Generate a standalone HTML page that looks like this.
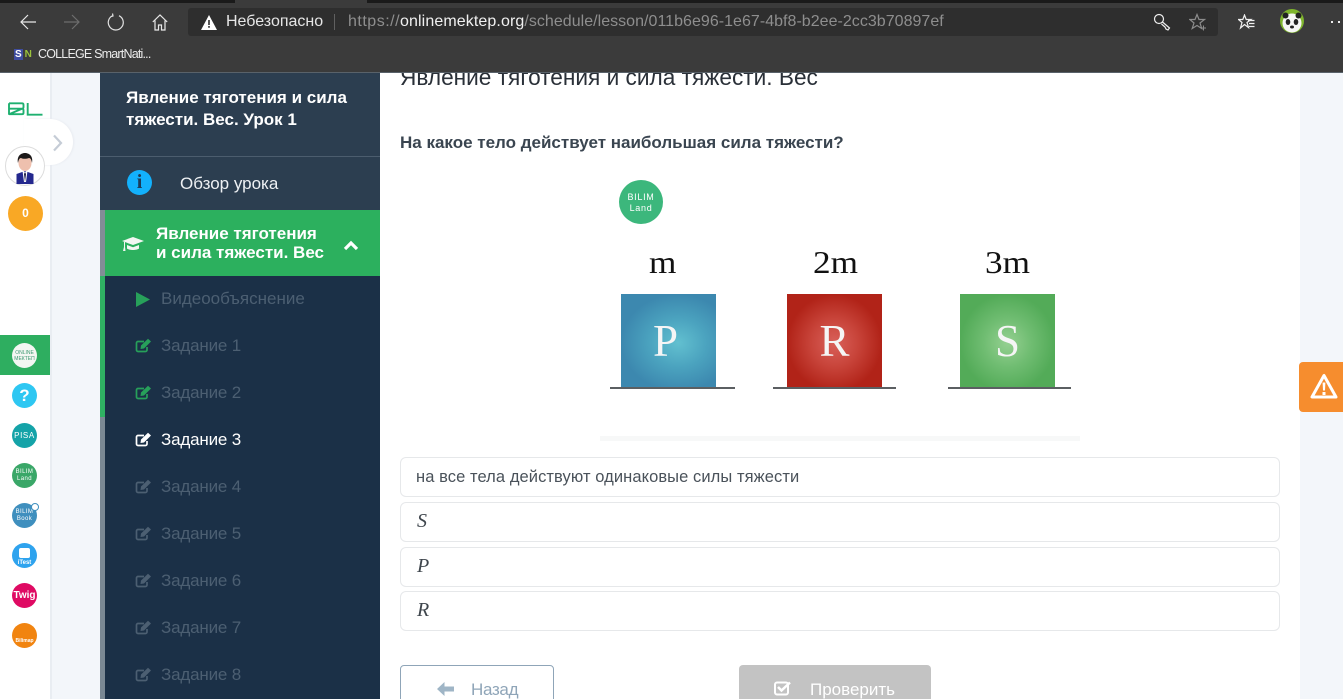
<!DOCTYPE html>
<html lang="ru"><head><meta charset="utf-8"><title>Явление тяготения</title>
<style>
html,body{margin:0;padding:0;width:1343px;height:699px;overflow:hidden;background:#fff}
body{position:relative;font-family:"Liberation Sans",sans-serif}
.a{position:absolute}
.t{position:absolute;white-space:nowrap;line-height:1}
.task{position:absolute;left:161px;font-size:17px;letter-spacing:-.18px;color:#4c5f72;white-space:nowrap;line-height:20px}
.ic{position:absolute;left:135px;width:17px;height:15px}
.opt{position:absolute;left:400px;width:878px;height:38px;border:1px solid #e6e8ea;border-radius:6px;background:#fff}
.m{position:absolute;left:417px;font:italic 20px "Liberation Serif",serif;color:#3f464d;line-height:20px}
.c{position:absolute;left:12px;width:25px;height:25px;border-radius:50%;color:#fff;text-align:center;font-size:6px;line-height:7px;overflow:hidden}
.box{position:absolute;top:294px;width:95px;height:94px;color:#f5f5f5;font:45px/94px "Liberation Serif",serif;text-align:center}
.base{position:absolute;top:387px;height:2px;background:#5b5f62}
.lab{position:absolute;top:244px;font:32px/36px "Liberation Serif",serif;color:#111;white-space:nowrap;transform:scaleX(1.1);transform-origin:0 50%}
</style></head><body>

<!-- page background -->
<div class="a" style="left:50px;top:73px;width:50px;height:626px;background:#f3f6fa"></div>
<div class="a" style="left:1300px;top:73px;width:43px;height:626px;background:#f3f6fa"></div>
<div class="a" style="left:380px;top:73px;width:920px;height:626px;background:#fff"></div>

<!-- main -->
<div class="t" style="left:400px;top:66px;font-size:22.65px;color:#2a3038">Явление тяготения и сила тяжести. Вес</div>
<div class="t" style="left:400px;top:134px;font-size:17px;font-weight:bold;color:#3a4550">На какое тело действует наибольшая сила тяжести?</div>

<div class="a" style="left:619px;top:180px;width:44px;height:44px;border-radius:50%;background:#3cb77c;color:#fff;font-size:9px;line-height:11px;letter-spacing:.7px;text-align:center;padding-top:12px;box-sizing:border-box">BILIM<br>Land</div>

<div class="lab" style="left:649px">m</div>
<div class="lab" style="left:813px">2m</div>
<div class="lab" style="left:985px">3m</div>
<div class="box" style="left:621px;text-indent:-6px;background:radial-gradient(ellipse at 60% 52%,#62c0d0 0%,#4ba3bf 35%,#3c88af 70%)">P</div>
<div class="box" style="left:787px;background:radial-gradient(ellipse at 50% 52%,#d9605a 0%,#c8443a 35%,#b12318 70%)">R</div>
<div class="box" style="left:960px;background:radial-gradient(ellipse at 50% 52%,#95d091 0%,#70bd72 35%,#53ab58 70%)">S</div>
<div class="base" style="left:610px;width:125px"></div>
<div class="base" style="left:773px;width:123px"></div>
<div class="base" style="left:948px;width:123px"></div>
<div class="a" style="left:600px;top:436px;width:480px;height:5px;background:#f7f8f8"></div>

<div class="opt" style="top:457px"></div>
<div class="opt" style="top:502px"></div>
<div class="opt" style="top:547px"></div>
<div class="opt" style="top:591px"></div>
<div class="t" style="left:416px;top:469px;font-size:16.500px;letter-spacing:.08px;color:#4a525a">на все тела действуют одинаковые силы тяжести</div>
<div class="m" style="top:511px">S</div>
<div class="m" style="top:556px">P</div>
<div class="m" style="top:600px">R</div>

<div class="a" style="left:400px;top:665px;width:152px;height:50px;border:1px solid #8fa5b8;border-radius:4px;background:#fff"></div>
<svg class="a" style="left:437px;top:682px" width="17" height="14" viewBox="0 0 17 14"><path d="M7.500 0 0 7l7.500 7V9.500H17v-5H7.500z" fill="#9fb5c6"/></svg>
<div class="t" style="left:471px;top:681px;font-size:17px;letter-spacing:-.3px;color:#8fa5b8">Назад</div>
<div class="a" style="left:739px;top:665px;width:192px;height:50px;border-radius:4px;background:#c3c3c3"></div>
<svg class="a" style="left:774px;top:681px" width="18" height="15" viewBox="0 0 18 15"><rect x="1" y="1.500" width="13" height="12" rx="2" fill="none" stroke="#fff" stroke-width="2"/><path d="m4 6 3.500 3.500L16 1.500" fill="none" stroke="#fff" stroke-width="2.500"/></svg>
<div class="t" style="left:810px;top:681px;font-size:17px;color:#fff">Проверить</div>

<!-- warning tab -->
<div class="a" style="left:1299px;top:362px;width:44px;height:50px;border-radius:4px 0 0 4px;background:#f68d2e"></div>
<svg class="a" style="left:1310px;top:373px" width="28" height="26" viewBox="0 0 28 26"><path d="M14 2.500 2 24h24z" fill="none" stroke="#fff" stroke-width="3" stroke-linejoin="round"/><path d="M12.600 9.500h2.800l-.4 8h-2zM12.500 19h3v3h-3z" fill="#fff"/></svg>

<!-- left rail -->
<div class="a" style="left:0;top:73px;width:50px;height:626px;background:#fff"></div>
<div class="a" style="left:50px;top:73px;width:2px;height:626px;background:#e9edf2"></div>
<div class="a" style="left:24px;top:119px;width:49px;height:46px;border-radius:0 24px 24px 0;background:#fff;box-shadow:1px 0 2px #e8ebf0"></div>
<svg class="a" style="left:52px;top:134px" width="11" height="18" viewBox="0 0 11 18"><path d="m2 1.500 7 7.500-7 7.500" fill="none" stroke="#c5ccd6" stroke-width="2.200"/></svg>
<svg class="a" style="left:8px;top:102px" width="35" height="14" viewBox="0 0 35 14"><path d="M1 1.300h13q1.500 0 1.500 1.500v2.200q0 1.700-1.500 1.700H1m13 0q1.500 0 1.500 1.700v2.300q0 1.500-1.500 1.500H1zM1 1.300v11.400M19.700 1v11.700H34.500" fill="none" stroke="#1fb070" stroke-width="1.900"/></svg>

<svg class="a" style="left:5px;top:146px" width="40" height="40" viewBox="0 0 40 40"><circle cx="20" cy="20" r="19.500" fill="#fff" stroke="#dcdcdc"/><path d="M11.500 38V28l8.500-3 8.500 3v10z" fill="#24288e"/><path d="m17.500 25 2.500 1 2.500-1-1.500 11h-2z" fill="#fff"/><path d="M20 26l1 2-1 8-1-8z" fill="#1c1c44"/><ellipse cx="20" cy="17" rx="6.500" ry="8" fill="#eec0ae"/><path d="M13 17c-1.500-7 3-10 7-10s8.500 3 7 10c-.5-3-1.500-5-3-5-3 1-6 1-8 0-1.500 0-2.500 2-3 5z" fill="#1d1a1a"/></svg>
<div class="a" style="left:8px;top:196px;width:35px;height:35px;border-radius:50%;background:#f9a825;color:#fff;font-size:12px;font-weight:bold;line-height:35px;text-align:center">0</div>

<div class="a" style="left:0;top:335px;width:50px;height:40px;background:#2eae60"></div>
<div class="c" style="top:343px;background:#f3f6f2;color:#3d9a72;font-size:5px;line-height:6px;padding-top:7px;box-sizing:border-box">ONLINE<br>МЕКТЕП</div>
<div class="c" style="top:383px;background:#2ec7f2;font-size:17px;line-height:25px;font-weight:bold">?</div>
<div class="c" style="top:423px;background:#14a3a8;font-size:8px;line-height:25px;letter-spacing:.6px">PISA</div>
<div class="c" style="top:463px;background:#3aa768;padding-top:6px;box-sizing:border-box;letter-spacing:.4px">BILIM<br>Land</div>
<div class="c" style="top:503px;background:#3f8fbe;padding-top:6px;box-sizing:border-box;letter-spacing:.4px">BILIM<br>Book</div>
<div class="a" style="left:31px;top:503px;width:6px;height:6px;border-radius:50%;background:#fff;border:1px solid #3f8fbe"></div>
<div class="c" style="top:543px;background:#2ea3ee"><div class="a" style="left:7px;top:5px;width:11px;height:10px;border-radius:2px;background:#fff"></div><div class="a" style="left:0;width:25px;top:17px;font-size:6px;line-height:6px;font-weight:bold">iTest</div></div>
<div class="c" style="top:583px;background:#df0a63;font-size:10px;line-height:25px;font-weight:bold">Twig</div>
<div class="c" style="top:623px;background:#f18410;padding-top:15px;box-sizing:border-box;font-size:5px;font-weight:bold">Bilimap</div>

<!-- course sidebar -->
<div class="a" style="left:100px;top:73px;width:280px;height:137px;background:#2c3e50"></div>
<div class="a" style="left:100px;top:156px;width:280px;height:1px;background:#4c5d6e"></div>
<div class="a" style="left:100px;top:210px;width:280px;height:489px;background:#1b3047"></div>
<div class="a" style="left:100px;top:210px;width:5px;height:66px;background:#828d97"></div>
<div class="a" style="left:100px;top:276px;width:5px;height:141px;background:#2fb163"></div>
<div class="a" style="left:100px;top:417px;width:5px;height:282px;background:#7a8894"></div>
<div class="a" style="left:105px;top:210px;width:275px;height:66px;background:#2cb05e"></div>

<div class="t" style="left:126px;top:87px;font-size:17px;line-height:22px;font-weight:bold;color:#fff">Явление тяготения и сила<br>тяжести. Вес. Урок 1</div>

<div class="a" style="left:127px;top:170px;width:25px;height:25px;border-radius:50%;background:#13b1fc;color:#1d3b58;font:bold 20px/25px 'Liberation Serif',serif;text-align:center">i</div>
<div class="t" style="left:180px;top:175px;font-size:17px;color:#eef1f4">Обзор урока</div>

<svg class="a" style="left:122px;top:236px" width="22" height="17" viewBox="0 0 22 17"><path d="M11 1 0 5l11 4 11-4z" fill="#f2f7f2"/><path d="M5 9v3.500c2 2 10 2 12 0V9l-6 2.200z" fill="#f2f7f2"/><path d="M2 6v5l-1 4h2.500L3 11V6z" fill="#f2f7f2"/></svg>
<div class="t" style="left:156px;top:224px;font-size:17px;line-height:19px;font-weight:bold;color:#fff">Явление тяготения<br>и сила тяжести. Вес</div>
<svg class="a" style="left:343px;top:240px" width="16" height="11" viewBox="0 0 16 11"><path d="m2 9 6-6 6 6" fill="none" stroke="#fff" stroke-width="3.200"/></svg>

<svg class="a" style="left:136px;top:292px" width="15" height="15" viewBox="0 0 15 15"><path d="M0 0 14 7.500 0 15z" fill="#27a05a"/></svg>
<div class="task" style="top:289px;letter-spacing:0">Видеообъяснение</div>

<svg width="0" height="0" style="position:absolute"><defs><symbol id="e" viewBox="0 0 17 15"><path d="M12 9v3a1.500 1.500 0 0 1-1.500 1.500H3A1.500 1.500 0 0 1 1.500 12V5A1.500 1.500 0 0 1 3 3.500h6" fill="none" stroke="currentColor" stroke-width="1.700"/><path d="M6 7.500 13 .8 16 3.500 9 10.500 5.500 11z" fill="currentColor"/></symbol></defs></svg>
<svg class="ic" style="top:338px;color:#27a05a"><use href="#e"/></svg><div class="task" style="top:336px">Задание 1</div>
<svg class="ic" style="top:385px;color:#27a05a"><use href="#e"/></svg><div class="task" style="top:383px">Задание 2</div>
<svg class="ic" style="top:432px;color:#fff"><use href="#e"/></svg><div class="task" style="top:430px;color:#fff">Задание 3</div>
<svg class="ic" style="top:479px;color:#4c5f72"><use href="#e"/></svg><div class="task" style="top:477px">Задание 4</div>
<svg class="ic" style="top:526px;color:#4c5f72"><use href="#e"/></svg><div class="task" style="top:524px">Задание 5</div>
<svg class="ic" style="top:573px;color:#4c5f72"><use href="#e"/></svg><div class="task" style="top:571px">Задание 6</div>
<svg class="ic" style="top:620px;color:#4c5f72"><use href="#e"/></svg><div class="task" style="top:618px">Задание 7</div>
<svg class="ic" style="top:667px;color:#4c5f72"><use href="#e"/></svg><div class="task" style="top:665px">Задание 8</div>

<!-- browser chrome -->
<div class="a" style="left:0;top:0;width:1343px;height:73px;background:#3b3b3b;border-bottom:1px solid #59626a;box-sizing:border-box"></div>
<div class="a" style="left:0;top:0;width:235px;height:3px;background:#1a1a1a"></div>
<div class="a" style="left:367px;top:0;width:976px;height:3px;background:#1a1a1a"></div>
<div class="a" style="left:188px;top:8px;width:1030px;height:28px;border-radius:3px;background:#2e2e2e"></div>

<svg class="a" style="left:19px;top:13px" width="18" height="18" viewBox="0 0 18 18"><path d="M17 9H2M9 2 2 9l7 7" fill="none" stroke="#e8e8e8" stroke-width="1.200"/></svg>
<svg class="a" style="left:63px;top:13px" width="18" height="18" viewBox="0 0 18 18"><path d="M1 9h15M9 2l7 7-7 7" fill="none" stroke="#6e6e6e" stroke-width="1.200"/></svg>
<svg class="a" style="left:107px;top:13px" width="18" height="18" viewBox="0 0 18 18"><path d="M6 2.500a7.500 7.500 0 1 0 6 .2M5.500 .5 6 3l-2.500.8" fill="none" stroke="#e0e0e0" stroke-width="1.200"/></svg>
<svg class="a" style="left:152px;top:14px" width="16" height="17" viewBox="0 0 16 17"><path d="M.8 8 8 1l7.200 7M3 6.500V16h3.500v-5h3v5H13V6.500" fill="none" stroke="#e8e8e8" stroke-width="1.200"/></svg>

<svg class="a" style="left:201px;top:15px" width="16" height="15" viewBox="0 0 16 15"><path d="M8 0 16 15H0z" fill="#fff"/><path d="M7.200 5h1.600v5H7.200zM7.200 11h1.600v1.800H7.200z" fill="#2e2e2e"/></svg>
<div class="t" style="left:226px;top:14px;font-size:16px;color:#e6e6e6">Небезопасно</div>
<div class="a" style="left:334px;top:14px;width:1px;height:16px;background:#606060"></div>
<div class="t" style="left:348px;top:14px;font-size:16px;letter-spacing:.03px;color:#8e8e8e"><span style="letter-spacing:.5px">https://</span><span style="color:#f0f0f0;letter-spacing:.1px">onlinemektep.org</span>/schedule/lesson/011b6e96-1e67-4bf8-b2ee-2cc3b70897ef</div>

<svg class="a" style="left:1153px;top:13px" width="19" height="18" viewBox="0 0 19 18"><circle cx="6" cy="6" r="4.500" fill="none" stroke="#eee" stroke-width="1.200"/><path d="m9.500 9 7 6-1.500 2-2-1-1-2-3.500-3" fill="none" stroke="#eee" stroke-width="1.200"/></svg>
<svg class="a" style="left:1189px;top:13px" width="18" height="18" viewBox="0 0 18 18"><path d="m8 1.500 2 5h5.500L11 10l1.700 5.500L8 12.500 3.200 15.500 5 10 .8 6.500H6z" fill="none" stroke="#8c8c8c" stroke-width="1.200"/><path d="M12 15h5M14.500 12.500v5" stroke="#8c8c8c"/></svg>
<svg class="a" style="left:1238px;top:14px" width="17" height="17" viewBox="0 0 17 17"><path d="m6.500 1 1.700 4.500H13L9 8.500l1.500 5-4-3-4 3.500L4 8.500.5 5.500h4.300z" fill="none" stroke="#f0f0f0" stroke-width="1.200"/><path d="M10 6.500h6.500M11 9.500h5.500M11 12.500h5.500" stroke="#f0f0f0" stroke-width="1.200"/></svg>
<svg class="a" style="left:1280px;top:9px" width="24" height="24" viewBox="0 0 24 24"><circle cx="12" cy="12" r="12" fill="#7fb52e"/><circle cx="12" cy="14" r="9.500" fill="#f6f6f6"/><circle cx="5.500" cy="6.500" r="3" fill="#222"/><circle cx="18.500" cy="6.500" r="3" fill="#222"/><ellipse cx="8" cy="13" rx="2.300" ry="3" fill="#222"/><ellipse cx="16" cy="13" rx="2.300" ry="3" fill="#222"/><ellipse cx="12" cy="18" rx="2" ry="1.500" fill="#222"/></svg>
<div class="a" style="left:1331px;top:21px;width:2px;height:2px;background:#eee"></div>
<div class="a" style="left:1338px;top:21px;width:2px;height:2px;background:#eee"></div>

<div class="t" style="left:14px;top:50px;font-size:10px;font-weight:bold;color:#fff"><span style="background:#3f4da0;padding:0 1px">S</span><span style="color:#9bc23c;margin-left:2px">N</span></div>
<div class="t" style="left:38px;top:48px;font-size:12.500px;letter-spacing:-.8px;color:#ececec">COLLEGE SmartNati...</div>
</body></html>
